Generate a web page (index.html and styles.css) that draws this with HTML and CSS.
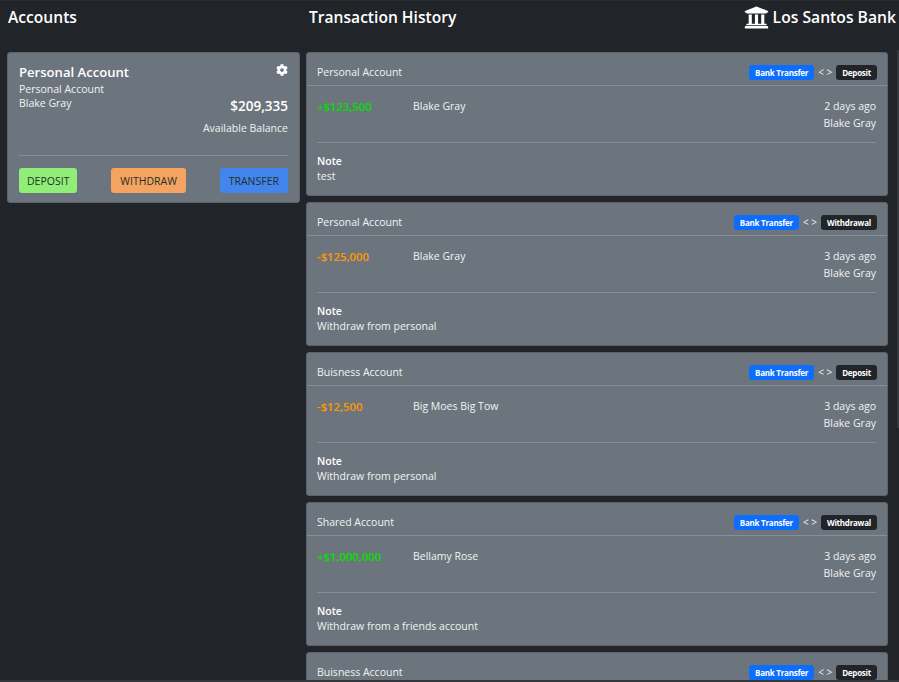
FILE: index.html
```html
<!DOCTYPE html>
<html lang="en">
<head>
    <meta charset="UTF-8">
    <title>Los Santos Bank</title>
    <link rel="stylesheet" href="styles.css">
</head>
<body>

<div class="page">
    <div class="top-bar">
        <h2 class="accounts-title">Accounts</h2>
        <h2 class="history-title">Transaction History</h2>
        <div class="brand">
            <svg class="brand-icon" viewBox="0 0 512 512" aria-hidden="true">
                <path d="M496 128v16a8 8 0 0 1-8 8h-24v12c0 6.627-5.373 12-12 12H60c-6.627 0-12-5.373-12-12v-12H24a8 8 0 0 1-8-8v-16a8 8 0 0 1 4.941-7.392l232-88a7.996 7.996 0 0 1 6.118 0l232 88A8 8 0 0 1 496 128zm-24 304H40c-13.255 0-24 10.745-24 24v16a8 8 0 0 0 8 8h464a8 8 0 0 0 8-8v-16c0-13.255-10.745-24-24-24zM96 192v192H60c-6.627 0-12 5.373-12 12v20h416v-20c0-6.627-5.373-12-12-12h-36V192h-64v192h-64V192h-64v192h-64V192H96z"/>
            </svg>
            <span>Los Santos Bank</span>
        </div>
    </div>

    <div class="columns">
        <!-- Accounts -->
        <div class="accounts">
            <div class="account-card">
                <div class="account-top">
                    <div class="account-info">
                        <div class="account-name">Personal Account</div>
                        <div>Personal Account</div>
                        <div>Blake Gray</div>
                    </div>
                    <div class="account-side">
                        <svg class="gear" viewBox="0 0 512 512" aria-hidden="true">
                            <path d="M487.4 315.7l-42.6-24.6c4.3-23.2 4.3-47 0-70.2l42.6-24.6c4.9-2.8 7.1-8.6 5.5-14-11.1-35.6-30-67.8-54.7-94.6-3.8-4.1-10-5.1-14.8-2.3L380.8 110c-17.9-15.4-38.5-27.3-60.8-35.1V25.8c0-5.6-3.9-10.5-9.4-11.7-36.7-8.2-74.3-7.8-109.2 0-5.5 1.2-9.4 6.1-9.4 11.7V75c-22.2 7.9-42.8 19.8-60.8 35.1L88.7 85.5c-4.9-2.8-11-1.9-14.8 2.3-24.7 26.7-43.6 58.9-54.7 94.6-1.7 5.4.6 11.2 5.5 14L67.3 221c-4.3 23.2-4.3 47 0 70.2l-42.6 24.6c-4.9 2.8-7.1 8.6-5.5 14 11.1 35.6 30 67.8 54.7 94.6 3.8 4.1 10 5.1 14.8 2.3l42.6-24.6c17.9 15.4 38.5 27.3 60.8 35.1v49.2c0 5.6 3.9 10.5 9.4 11.7 36.7 8.2 74.3 7.8 109.2 0 5.5-1.2 9.4-6.1 9.4-11.7v-49.2c22.2-7.9 42.8-19.8 60.8-35.1l42.6 24.6c4.9 2.8 11 1.9 14.8-2.3 24.7-26.7 43.6-58.9 54.7-94.6 1.5-5.5-.7-11.3-5.6-14.1zM256 336c-44.1 0-80-35.9-80-80s35.9-80 80-80 80 35.9 80 80-35.9 80-80 80z"/>
                        </svg>
                        <div class="balance">$209,335</div>
                        <div class="balance-label">Available Balance</div>
                    </div>
                </div>
                <div class="account-actions">
                    <button class="btn btn-deposit">DEPOSIT</button>
                    <button class="btn btn-withdraw">WITHDRAW</button>
                    <button class="btn btn-transfer">TRANSFER</button>
                </div>
            </div>
        </div>

        <!-- Transactions -->
        <div class="transactions">
            <div class="tx-card">
                <div class="tx-head">
                    <span>Personal Account</span>
                    <div class="tx-tags"><span class="tag tag-blue">Bank Transfer</span><span class="tag-sep">&lt; &gt;</span><span class="tag tag-dark">Deposit</span></div>
                </div>
                <div class="tx-body">
                    <div class="tx-row">
                        <div class="amount plus">+$123,500</div>
                        <div class="party">Blake Gray</div>
                        <div class="tx-meta"><div>2 days ago</div><div>Blake Gray</div></div>
                    </div>
                    <div class="note"><strong>Note</strong><div>test</div></div>
                </div>
            </div>

            <div class="tx-card">
                <div class="tx-head">
                    <span>Personal Account</span>
                    <div class="tx-tags"><span class="tag tag-blue">Bank Transfer</span><span class="tag-sep">&lt; &gt;</span><span class="tag tag-dark">Withdrawal</span></div>
                </div>
                <div class="tx-body">
                    <div class="tx-row">
                        <div class="amount minus">-$125,000</div>
                        <div class="party">Blake Gray</div>
                        <div class="tx-meta"><div>3 days ago</div><div>Blake Gray</div></div>
                    </div>
                    <div class="note"><strong>Note</strong><div>Withdraw from personal</div></div>
                </div>
            </div>

            <div class="tx-card">
                <div class="tx-head">
                    <span>Buisness Account</span>
                    <div class="tx-tags"><span class="tag tag-blue">Bank Transfer</span><span class="tag-sep">&lt; &gt;</span><span class="tag tag-dark">Deposit</span></div>
                </div>
                <div class="tx-body">
                    <div class="tx-row">
                        <div class="amount minus">-$12,500</div>
                        <div class="party">Big Moes Big Tow</div>
                        <div class="tx-meta"><div>3 days ago</div><div>Blake Gray</div></div>
                    </div>
                    <div class="note"><strong>Note</strong><div>Withdraw from personal</div></div>
                </div>
            </div>

            <div class="tx-card">
                <div class="tx-head">
                    <span>Shared Account</span>
                    <div class="tx-tags"><span class="tag tag-blue">Bank Transfer</span><span class="tag-sep">&lt; &gt;</span><span class="tag tag-dark">Withdrawal</span></div>
                </div>
                <div class="tx-body">
                    <div class="tx-row">
                        <div class="amount plus">+$1,000,000</div>
                        <div class="party">Bellamy Rose</div>
                        <div class="tx-meta"><div>3 days ago</div><div>Blake Gray</div></div>
                    </div>
                    <div class="note"><strong>Note</strong><div>Withdraw from a friends account</div></div>
                </div>
            </div>

            <div class="tx-card">
                <div class="tx-head">
                    <span>Buisness Account</span>
                    <div class="tx-tags"><span class="tag tag-blue">Bank Transfer</span><span class="tag-sep">&lt; &gt;</span><span class="tag tag-dark">Deposit</span></div>
                </div>
                <div class="tx-body">
                    <div class="tx-row"></div>
                </div>
            </div>
        </div>
    </div>
</div>

<!-- Scrollbar und unterer Fensterrand -->
<div class="scroll-thumb"></div>
<div class="window-edge"></div>

</body>
</html>
```

FILE: styles.css
```css
html, body {
    height: 100%;
    margin: 0;
    overflow: hidden;
}

body {
    font-family: "Open Sans", "Noto Sans", sans-serif;
    font-size: 10.5px;
    line-height: 17px;
    background-color: #212529;
    color: #f1f2f3;
}

.page {
    padding: 0 3px 0 7px;
    border-top: 1px solid #2a2e33;
}

/* Kopfzeile */
.top-bar {
    display: flex;
    align-items: center;
    height: 51px;
    padding-bottom: 19px;
    box-sizing: border-box;
}

h2 {
    margin: 0;
    font-size: 15.6px;
    font-weight: 600;
    color: #fff;
}

.accounts-title {
    width: 302px;
    padding-left: 1px;
    box-sizing: border-box;
}

.history-title {
    flex: 1;
}

.brand {
    display: flex;
    align-items: center;
    gap: 4px;
    font-size: 15.7px;
    font-weight: 600;
    color: #fff;
}

.brand-icon {
    width: 25px;
    height: 25px;
    fill: #fff;
}

.columns {
    display: flex;
    gap: 6px;
    align-items: flex-start;
}

/* Konten */
.accounts {
    width: 293px;
    flex-shrink: 0;
}

.account-card {
    background-color: #6c757d;
    border: 1px solid #5c646b;
    border-radius: 3px;
    padding: 10px 11px 9px;
}

.account-top {
    display: flex;
    justify-content: space-between;
    height: 92px;
    border-bottom: 1px solid #868e96;
}

.account-info div {
    line-height: 14px;
}

.account-info .account-name {
    font-size: 13.1px;
    font-weight: 600;
    color: #fff;
    line-height: 18px;
    margin-bottom: 1px;
}

.account-side {
    display: flex;
    flex-direction: column;
    align-items: flex-end;
}

.gear {
    width: 12px;
    height: 12px;
    fill: #fff;
    margin: 1px 0 19px;
}

.balance {
    font-size: 13.5px;
    font-weight: 600;
    color: #fff;
    line-height: 22px;
}

.balance-label {
    margin-top: 3px;
}

.account-actions {
    display: flex;
    justify-content: space-between;
    margin-top: 12px;
}

.btn {
    height: 25px;
    padding: 0 9px;
    border: none;
    border-radius: 3px;
    font-family: inherit;
    font-size: 10.5px;
    color: #22302a;
}

.btn-deposit {
    background-color: #90ee78;
    padding: 0 8px;
}

.btn-withdraw {
    background-color: #f4a460;
}

.btn-transfer {
    background-color: #4285ed;
}

/* Transaktionen */
.transactions {
    flex: 1;
    display: flex;
    flex-direction: column;
    gap: 6px;
    margin-right: 8px;
}

.tx-card {
    background-color: #6c757d;
    border: 1px solid #5c646b;
    border-radius: 3px;
}

.tx-head {
    display: flex;
    justify-content: space-between;
    align-items: center;
    height: 33px;
    box-sizing: border-box;
    padding: 6px 10px 0;
    border-bottom: 1px solid #868e96;
}

.tx-tags {
    display: flex;
    align-items: center;
}

.tag {
    font-size: 8px;
    letter-spacing: -0.25px;
    font-weight: 700;
    line-height: 15px;
    padding: 0 6px;
    border-radius: 3px;
    color: #fff;
}

.tag-blue {
    background-color: #0d6efd;
}

.tag-dark {
    background-color: #212529;
}

.tag-sep {
    margin: 0 4px;
    font-size: 10px;
    white-space: pre;
}

.tx-body {
    padding: 12px 11px 11px 10px;
}

.tx-row {
    display: flex;
    height: 44px;
    border-bottom: 1px solid #868e96;
}

.amount {
    width: 96px;
    font-size: 11.3px;
    font-weight: 600;
}

.plus {
    color: #00e000;
}

.minus {
    color: #ff9800;
}

.party {
    flex: 1;
}

.tx-meta {
    text-align: right;
}

.note {
    padding-top: 11px;
    line-height: 15px;
}

.note strong {
    font-weight: 600;
    color: #fff;
}

/* liegt über dem Seitenrand */
.scroll-thumb {
    position: fixed;
    top: 50px;
    right: 0;
    width: 2px;
    height: 378px;
    background-color: #34383d;
}

.window-edge {
    position: fixed;
    left: 0;
    right: 0;
    bottom: 0;
    height: 2px;
    background-color: #33373b;
}
```
